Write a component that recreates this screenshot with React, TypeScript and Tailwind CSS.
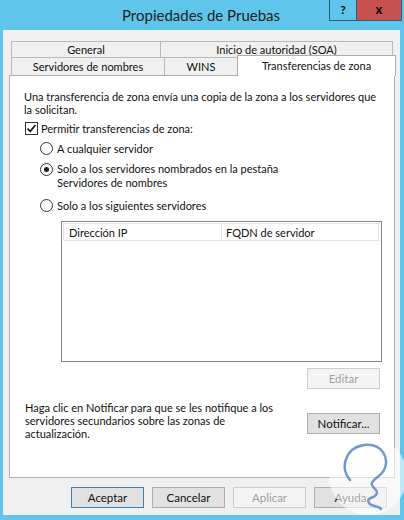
import React from "react";

const FONT = { fontFamily: 'Lato, "Noto Sans", sans-serif' };

function Radio({ checked }: { checked?: boolean }) {
  return (
    <span className="w-[13px] h-[13px] rounded-full border border-[#333333] bg-white flex items-center justify-center shrink-0">
      {checked && <span className="w-[5px] h-[5px] rounded-full bg-[#1a1a1a]" />}
    </span>
  );
}

function Btn({
  children,
  kind = "normal",
}: {
  children: React.ReactNode;
  kind?: "normal" | "default" | "disabled";
}) {
  const cls =
    kind === "default"
      ? "border-[#3c7fb1] bg-[#e1e1e1] text-[#111]"
      : kind === "disabled"
      ? "border-[#cccccc] bg-[#f4f4f4] text-[#a0a0a0]"
      : "border-[#adadad] bg-[#e1e1e1] text-[#111]";
  return (
    <div className={`w-[73px] h-[21px] border flex items-center justify-center text-[11.5px] leading-none whitespace-nowrap ${cls}`}>
      {children}
    </div>
  );
}

export default function App() {
  return (
    <div className="relative w-[404px] h-[520px] bg-[#60c5eb] overflow-hidden" style={FONT}>
      {/* Title bar */}
      <div className="relative h-[30px] flex items-center justify-center">
        <span className="text-[15px] text-[#222222] leading-none pr-[2px]">Propiedades de Pruebas</span>
        <div className="absolute right-[2px] top-0 flex">
          <div className="w-[27px] h-[21px] border border-t-0 border-r-0 border-[#2f5f78] flex items-center justify-center text-[12px] font-bold text-black">
            ?
          </div>
          <div className="w-[46px] h-[21px] bg-[#c75050] border border-t-0 border-[#2f5f78] flex items-center justify-center text-[13px] font-bold text-black">
            x
          </div>
        </div>
      </div>

      {/* Body */}
      <div className="ml-[3px] w-[397px] h-[485px] bg-[#f0f0f0] pt-[11px] pl-[6px] text-[11px] text-[#111111] whitespace-nowrap">
        {/* Tabs */}
        <div className="pl-[2px]">
          <div className="flex h-[16px]">
            <div className="w-[150px] h-[16px] border border-b-0 border-[#b9b9b9] bg-[#f0f0f0] flex items-center justify-center leading-none">
              General
            </div>
            <div className="-ml-px w-[233px] h-[16px] border border-b-0 border-[#b9b9b9] bg-[#f0f0f0] flex items-center justify-center leading-none">
              Inicio de autoridad (SOA)
            </div>
          </div>
          <div className="flex items-end h-[18px]">
            <div className="w-[154px] h-[18px] border border-b-0 border-[#b9b9b9] bg-[#f0f0f0] flex items-center justify-center leading-none">
              Servidores de nombres
            </div>
            <div className="-ml-px w-[74px] h-[18px] border border-b-0 border-[#b9b9b9] bg-[#f0f0f0] flex items-center justify-center leading-none">
              WINS
            </div>
            <div className="relative z-10 -ml-px -mb-px w-[159px] h-[21px] border border-b-0 border-[#adadad] bg-white flex items-start justify-center pt-[4px] leading-none">
              Transferencias de zona
            </div>
          </div>
        </div>

        {/* Panel */}
        <div className="w-[386px] h-[403px] border border-[#adadad] bg-white pl-[14px] pr-[14px] flex flex-col">
          <p className="mt-[14px] leading-[13px]">
            Una transferencia de zona envía una copia de la zona a los servidores que
            <br />
            la solicitan.
          </p>

          <div className="mt-[6px] flex items-center h-[13px] ml-[1px]">
            <span className="w-[13px] h-[13px] border border-[#333333] bg-white flex items-center justify-center shrink-0">
              <svg width="11" height="11" viewBox="0 0 11 11">
                <path d="M1.5 5.5 L4.2 8.3 L9.5 2" fill="none" stroke="#1a1a1a" strokeWidth="1.8" />
              </svg>
            </span>
            <span className="ml-[3px] leading-none">Permitir transferencias de zona:</span>
          </div>

          <div className="mt-[7px] flex items-center h-[13px] ml-[16px]">
            <Radio />
            <span className="ml-[4px] leading-none">A cualquier servidor</span>
          </div>

          <div className="mt-[7px] flex items-start ml-[16px]">
            <span className="mt-[1px]">
              <Radio checked />
            </span>
            <span className="ml-[4px] leading-[14px]">
              Solo a los servidores nombrados en la pestaña
              <br />
              Servidores de nombres
            </span>
          </div>

          <div className="mt-[9px] flex items-center h-[13px] ml-[16px]">
            <Radio />
            <span className="ml-[4px] leading-none">Solo a los siguientes servidores</span>
          </div>

          {/* List */}
          <div className="mt-[9px] ml-[37px] w-[321px] h-[141px] border border-[#828790] bg-white p-px">
            <div className="flex h-[18px] border border-[#e5e5e5] border-r-0">
              <div className="w-[158px] border-r border-[#e5e5e5] pl-[5px] flex items-center leading-none">
                Dirección IP
              </div>
              <div className="flex-1 pl-[4px] flex items-center leading-none border-r border-[#e5e5e5] mr-[1px]">
                FQDN de servidor
              </div>
            </div>
          </div>

          <div className="mt-[6px] flex justify-end">
            <Btn kind="disabled">Editar</Btn>
          </div>

          <div className="mt-[12px] flex justify-between items-start">
            <p className="leading-[13px] pl-[1px]">
              Haga clic en Notificar para que se les notifique a los
              <br />
              servidores secundarios sobre las zonas de
              <br />
              actualización.
            </p>
            <div className="mt-[12px]">
              <Btn>Notificar...</Btn>
            </div>
          </div>
        </div>

        {/* Bottom buttons */}
        <div className="mt-[9px] flex justify-end gap-[8px] pr-[13px]">
          <Btn kind="default">Aceptar</Btn>
          <Btn>Cancelar</Btn>
          <Btn kind="disabled">Aplicar</Btn>
          <Btn>Ayuda</Btn>
        </div>
      </div>

      {/* Watermark */}
      <svg
        className="absolute left-[326px] top-[436px] pointer-events-none"
        width="80"
        height="84"
        viewBox="0 0 80 84"
      >
        <circle cx="42" cy="40" r="39" fill="#ffffff" opacity="0.6" />
        <path
          d="M24 44 C14 34, 18 12, 38 9 C56 7, 64 22, 58 34 C55 40, 48 42, 46 47 C44 52, 54 53, 50 59 C47 63, 40 61, 43 67 C45 71, 52 69, 55 73"
          fill="none"
          stroke="#5b86c5"
          strokeWidth="2.5"
          strokeLinecap="round"
          opacity="0.85"
        />
      </svg>
    </div>
  );
}
